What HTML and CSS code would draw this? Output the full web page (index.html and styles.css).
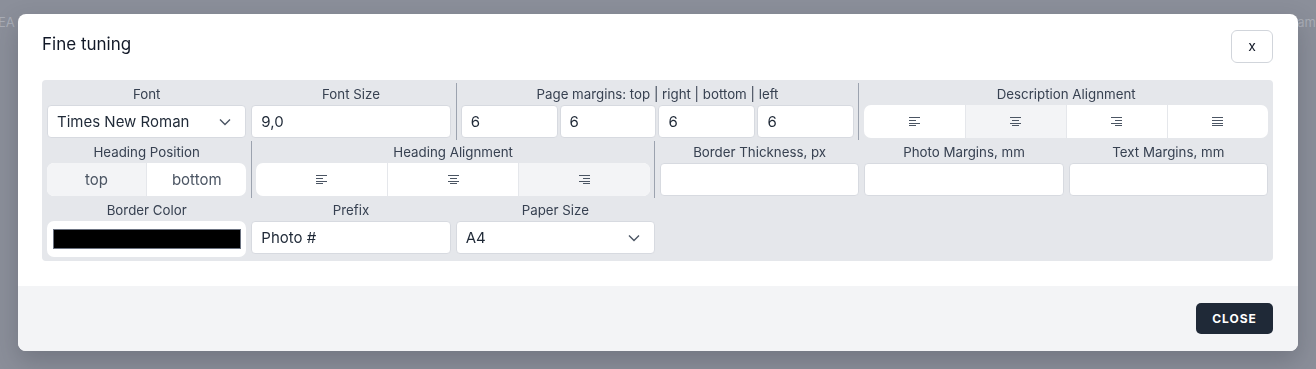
FILE: index.html
```html
<!DOCTYPE html>
<html>
<head>
<meta charset="utf-8">
<title>Fine tuning</title>
<link rel="stylesheet" href="styles.css">
</head>
<body>
	<div class="page">
		<span class="pageText">EA</span>
		<span class="pageText">am</span>
	</div>

	<div class="overlay">
		<div class="modal">
			<div class="modalHeader">
				<h3 class="modalTitle">Fine tuning</h3>
				<button class="xButton" type="button">x</button>
			</div>

			<div class="modalBody">
				<div class="tuneGrid">
					<!-- row 1 -->
					<div class="cell">
						<label class="cellLabel">Font</label>
						<div class="field select">
							<span>Times New Roman</span>
							<svg class="chevron" width="12" height="8" viewBox="0 0 12 8"><path d="M1 1.5 L6 6.5 L11 1.5" fill="none" stroke="#4b5563" stroke-width="1.4"/></svg>
						</div>
					</div>
					<div class="cell">
						<label class="cellLabel">Font Size</label>
						<div class="field">9,0</div>
					</div>
					<div class="cell span2 divided">
						<label class="cellLabel">Page margins: top | right | bottom | left</label>
						<div class="quad">
							<div class="field">6</div>
							<div class="field">6</div>
							<div class="field">6</div>
							<div class="field">6</div>
						</div>
					</div>
					<div class="cell span2">
						<label class="cellLabel">Description Alignment</label>
						<div class="segmented">
							<div class="segment"><svg width="11" height="9" viewBox="0 0 11 9"><path d="M0 .5H11M0 3.5H7M0 6.5H11M0 8.5H7" stroke="#4b5563" stroke-width="1"/></svg></div>
							<div class="segment active"><svg width="11" height="9" viewBox="0 0 11 9"><path d="M0 .5H11M2 3.5H9M0 6.5H11M2 8.5H9" stroke="#4b5563" stroke-width="1"/></svg></div>
							<div class="segment"><svg width="11" height="9" viewBox="0 0 11 9"><path d="M0 .5H11M4 3.5H11M0 6.5H11M4 8.5H11" stroke="#4b5563" stroke-width="1"/></svg></div>
							<div class="segment"><svg width="11" height="9" viewBox="0 0 11 9"><path d="M0 .5H11M0 3.5H11M0 6.5H11M0 8.5H11" stroke="#4b5563" stroke-width="1"/></svg></div>
						</div>
					</div>

					<!-- row 2 -->
					<div class="cell">
						<label class="cellLabel">Heading Position</label>
						<div class="segmented">
							<div class="segment active textSeg">top</div>
							<div class="segment textSeg">bottom</div>
						</div>
					</div>
					<div class="cell span2 divided">
						<label class="cellLabel">Heading Alignment</label>
						<div class="segmented">
							<div class="segment"><svg width="11" height="9" viewBox="0 0 11 9"><path d="M0 .5H11M0 3.5H7M0 6.5H11M0 8.5H7" stroke="#4b5563" stroke-width="1"/></svg></div>
							<div class="segment"><svg width="11" height="9" viewBox="0 0 11 9"><path d="M0 .5H11M2 3.5H9M0 6.5H11M2 8.5H9" stroke="#4b5563" stroke-width="1"/></svg></div>
							<div class="segment active"><svg width="11" height="9" viewBox="0 0 11 9"><path d="M0 .5H11M4 3.5H11M0 6.5H11M4 8.5H11" stroke="#4b5563" stroke-width="1"/></svg></div>
						</div>
					</div>
					<div class="cell">
						<label class="cellLabel">Border Thickness, px</label>
						<div class="field"></div>
					</div>
					<div class="cell">
						<label class="cellLabel">Photo Margins, mm</label>
						<div class="field"></div>
					</div>
					<div class="cell">
						<label class="cellLabel">Text Margins, mm</label>
						<div class="field"></div>
					</div>

					<!-- row 3 -->
					<div class="cell">
						<label class="cellLabel">Border Color</label>
						<div class="colorBox"><div class="swatch"></div></div>
					</div>
					<div class="cell">
						<label class="cellLabel">Prefix</label>
						<div class="field">Photo #</div>
					</div>
					<div class="cell">
						<label class="cellLabel">Paper Size</label>
						<div class="field select">
							<span>A4</span>
							<svg class="chevron" width="12" height="8" viewBox="0 0 12 8"><path d="M1 1.5 L6 6.5 L11 1.5" fill="none" stroke="#4b5563" stroke-width="1.4"/></svg>
						</div>
					</div>
				</div>
			</div>

			<div class="modalFooter">
				<button class="closeButton" type="button">Close</button>
			</div>
		</div>
	</div>
</body>
</html>
```

FILE: styles.css
```css
html, body {
	margin: 0;
	padding: 0;
}

body {
	background-color: #8b8f9a;
	font-family: Inter, "Noto Sans", sans-serif;
	color: #1f2937;
	height: 369px;
	overflow: hidden;
}

.page {
	display: flex;
	justify-content: space-between;
	padding: 14px 0 0 0;
	margin: 0 0 0 -2px;
}

.pageText {
	font-size: 13px;
	color: #a9adb6;
}

.overlay {
	position: fixed;
	inset: 0;
	display: flex;
	justify-content: center;
	align-items: flex-start;
	padding-top: 14px;
}

.modal {
	width: 1280px;
	background-color: #fff;
	border-radius: 8px;
	overflow: hidden;
	box-shadow: 0 10px 24px rgba(40, 44, 56, 0.25);
}

.modalHeader {
	display: flex;
	justify-content: space-between;
	align-items: center;
	padding: 16px 25px 17px 24px;
}

.modalTitle {
	margin: 0;
	font-size: 17px;
	font-weight: 400;
	color: #111827;
	margin-top: -5px;
}

.xButton {
	width: 42px;
	height: 33px;
	background: #fff;
	border: 1px solid #d1d5db;
	border-radius: 6px;
	font-family: Inter, sans-serif;
	font-size: 14px;
	color: #111827;
	padding: 0 0 2px 0;
}

.modalBody {
	padding: 0 25px 25px 24px;
}

.tuneGrid {
	display: grid;
	grid-template-columns: repeat(6, 1fr);
	column-gap: 5px;
	row-gap: 4px;
	background-color: #e5e7eb;
	border-radius: 4px;
	padding: 4px 5px 4px 5px;
}

.cell {
	display: flex;
	flex-direction: column;
	gap: 1px;
	min-width: 0;
}

.span2 {
	grid-column: span 2;
}

.divided {
	border-left: 1px solid #9ca3af;
	border-right: 1px solid #9ca3af;
	padding: 0 4px;
	margin: -1px 0 -2px 0;
	padding-top: 1px;
	padding-bottom: 2px;
}

.cellLabel {
	display: block;
	text-align: center;
	font-size: 13.3px;
	line-height: 20px;
	color: #374151;
	white-space: nowrap;
}

.field {
	height: 33px;
	box-sizing: border-box;
	background-color: #fff;
	border: 1px solid #d7dae0;
	border-radius: 4px;
	padding: 0 9px;
	font-size: 15px;
	line-height: 31px;
	color: #1f2937;
}

.select {
	display: flex;
	justify-content: space-between;
	align-items: center;
	padding-right: 14px;
}

.chevron {
	display: block;
}

.quad {
	display: grid;
	grid-template-columns: repeat(4, 1fr);
	gap: 2px;
}

.segmented {
	display: flex;
	height: 33px;
	background-color: #fff;
	border-radius: 7px;
	overflow: hidden;
}

.segment {
	flex: 1;
	display: flex;
	align-items: center;
	justify-content: center;
	border-left: 1px solid #e5e7eb;
}

.segment:first-child {
	border-left: none;
}

.segment.active {
	background-color: #f3f4f6;
}

.textSeg {
	font-size: 15px;
	color: #4b5563;
}

.colorBox {
	height: 36px;
	box-sizing: border-box;
	background-color: #fff;
	border-radius: 7px;
	padding: 8px 5px 8px 6px;
}

.swatch {
	height: 100%;
	box-sizing: border-box;
	background-color: #000;
	border: 1px solid #6b7280;
}

.modalFooter {
	display: flex;
	justify-content: flex-end;
	background-color: #f3f4f6;
	padding: 17px 25px 17px 24px;
}

.closeButton {
	width: 77px;
	height: 31px;
	background-color: #1f2937;
	color: #fff;
	border: none;
	border-radius: 5px;
	font-family: Inter, sans-serif;
	font-size: 12px;
	font-weight: 700;
	letter-spacing: 1px;
	text-transform: uppercase;
}
```
